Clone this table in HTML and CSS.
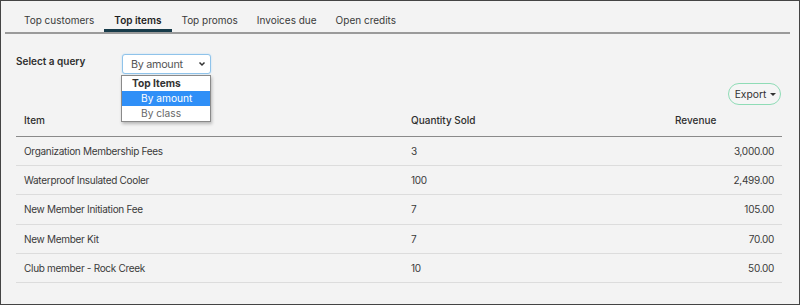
FILE: index.html
```html
<!DOCTYPE html>
<html lang="en">
<head>
<meta charset="utf-8">
<title>Top items</title>
<link rel="stylesheet" href="styles.css">
</head>
<body>
<div class="frame">
  <nav class="tabs">
    <span class="tab">Top customers</span>
    <span class="tab active">Top items</span>
    <span class="tab">Top promos</span>
    <span class="tab">Invoices due</span>
    <span class="tab">Open credits</span>
  </nav>
  <main class="content">
    <div class="query-row">
      <span class="query-label">Select a query</span>
      <div class="select-wrap">
        <div class="select">
          <span>By amount</span>
          <svg class="chev" width="8" height="6" viewBox="0 0 8 6"><path d="M1.5 1.5 L4 4 L6.5 1.5" fill="none" stroke="#333" stroke-width="1.5"/></svg>
        </div>
        <ul class="options">
          <li class="group">Top Items</li>
          <li class="opt selected">By amount</li>
          <li class="opt">By class</li>
        </ul>
      </div>
    </div>
    <div class="toolbar">
      <button class="export">Export <span class="caret"></span></button>
    </div>
    <table class="grid">
      <thead>
        <tr><th class="c-item">Item</th><th class="c-qty">Quantity Sold</th><th class="c-rev">Revenue</th></tr>
      </thead>
      <tbody>
        <tr><td>Organization Membership Fees</td><td>3</td><td class="num">3,000.00</td></tr>
        <tr><td>Waterproof Insulated Cooler</td><td>100</td><td class="num">2,499.00</td></tr>
        <tr><td>New Member Initiation Fee</td><td>7</td><td class="num">105.00</td></tr>
        <tr><td>New Member Kit</td><td>7</td><td class="num">70.00</td></tr>
        <tr><td>Club member - Rock Creek</td><td>10</td><td class="num">50.00</td></tr>
      </tbody>
    </table>
  </main>
</div>
</body>
</html>
```
FILE: styles.css
```css
* { box-sizing: border-box; }
html, body { margin: 0; padding: 0; }
body {
  font-family: "Inter", "Open Sans", sans-serif;
  color: #333;
  background: #f3f3f3;
}
.frame {
  width: 800px;
  height: 305px;
  border: 1px solid #444;
  background: #f3f3f3;
  overflow: hidden;
}
.tabs {
  display: flex;
  margin: 0 9px 0 4px;
  padding: 11px 0 0 9.5px;
  border-bottom: 2px solid #9a9a9a;
  height: 33px;
}
.tab {
  font-size: 10px;
  line-height: 17px;
  padding: 0 9.5px;
  height: 20px;
  color: #3a3a3a;
}
.tab.active {
  font-weight: 600;
  color: #1e1e1e;
  border-bottom: 3px solid #173b4a;
  padding: 0 10.5px;
}
.content {
  padding: 0 18px 0 14px;
}
.query-row {
  display: flex;
  align-items: flex-start;
  margin-top: 20px;
  height: 20px;
}
.query-label {
  font-size: 10px;
  font-weight: 600;
  width: 106px;
  line-height: 14px;
  padding-left: 1px;
  color: #2e2e2e;
}
.select-wrap {
  position: relative;
  width: 90px;
}
.select {
  display: flex;
  align-items: center;
  justify-content: space-between;
  height: 20px;
  margin-left: 1px;
  padding: 0 4px 0 8px;
  background: #fff;
  border: 1px solid #8fc3ea;
  border-radius: 3px;
  box-shadow: 0 0 2px #b9dcf6;
  font-size: 10.8px;
  letter-spacing: -0.3px;
  color: #555;
}
.options {
  position: absolute;
  left: 0;
  top: 21px;
  width: 90px;
  margin: 0;
  padding: 0;
  list-style: none;
  background: #fff;
  border: 1px solid #8a8a8a;
  box-shadow: 1px 2px 3px rgba(0,0,0,0.25);
  font-size: 10.2px;
}
.options li {
  height: 15px;
  line-height: 15px;
}
.options .group {
  font-weight: 700;
  padding-left: 10px;
  color: #333;
}
.options .opt {
  padding-left: 19px;
  color: #666;
}
.options .opt.selected {
  background: #2f8ff7;
  color: #fff;
}
.toolbar {
  display: flex;
  justify-content: flex-end;
  margin-top: 9px;
  height: 22px;
}
.export {
  font-family: inherit;
  font-size: 10.3px;
  color: #333;
  background: #f5f5f5;
  border: 1.5px solid #8fdcb6;
  border-radius: 12px;
  height: 22px;
  width: 53px;
  padding: 0 0 0 2px;
  display: flex;
  align-items: center;
  justify-content: center;
  gap: 4px;
}
.caret {
  width: 0;
  height: 0;
  border-left: 3px solid transparent;
  border-right: 3px solid transparent;
  border-top: 3px solid #333;
}
.grid {
  width: 766px;
  margin-left: 1px;
  border-collapse: collapse;
  font-size: 10px;
}
.grid th {
  text-align: left;
  font-weight: 500;
  font-size: 10px;
  height: 31px;
  padding: 0 8px;
  border-bottom: 1.5px solid #8a8a8a;
  color: #2e2e2e;
}
.grid td {
  height: 29.4px;
  padding: 0 8px;
  border-bottom: 1px solid #dcdcdc;
  color: #3a3a3a;
  letter-spacing: -0.3px;
}
.c-item { width: 387px; }
.c-qty { width: 264px; }
.c-rev { width: 115px; }
.grid td.num { text-align: right; }
```
